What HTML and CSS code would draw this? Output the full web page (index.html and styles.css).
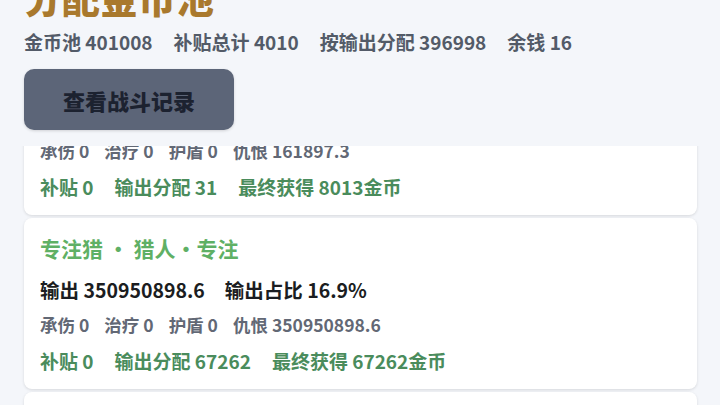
FILE: index.html
```html
<!DOCTYPE html>
<html lang="zh">
<head>
<meta charset="utf-8">
<link rel="stylesheet" href="styles.css">
</head>
<body>
<div class="page">
  <header class="head">
    <h1 class="title">分配金币池</h1>
    <div class="stats">
      <span>金币池 401008</span>
      <span>补贴总计 4010</span>
      <span>按输出分配 396998</span>
      <span>余钱 16</span>
    </div>
    <button class="btn">查看战斗记录</button>
  </header>
  <div class="viewport">
    <div class="list">
      <div class="card">
        <div class="name">火焰法 · 法师·火焰</div>
        <div class="main"><span>输出 161897.3</span><span>输出占比 0.0%</span></div>
        <div class="sub"><span>承伤 0</span><span>治疗 0</span><span>护盾 0</span><span>仇恨 161897.3</span></div>
        <div class="gain"><span>补贴 0</span><span>输出分配 31</span><span>最终获得 8013金币</span></div>
      </div>
      <div class="card">
        <div class="name">专注猎 · 猎人·专注</div>
        <div class="main"><span>输出 350950898.6</span><span>输出占比 16.9%</span></div>
        <div class="sub"><span>承伤 0</span><span>治疗 0</span><span>护盾 0</span><span>仇恨 350950898.6</span></div>
        <div class="gain"><span>补贴 0</span><span>输出分配 67262</span><span>最终获得 67262金币</span></div>
      </div>
      <div class="card">
        <div class="name">防护战 · 战士·防护</div>
        <div class="main"><span>输出 0</span><span>输出占比 0.0%</span></div>
      </div>
    </div>
  </div>
</div>
</body>
</html>
```
FILE: styles.css
```css
* { box-sizing: border-box; }
html, body { margin: 0; padding: 0; }
body {
  background: #f4f6fa;
  font-family: "Noto Sans CJK SC", "Noto Sans", sans-serif;
  width: 720px;
  height: 405px;
  overflow: hidden;
}
.page {
  display: flex;
  flex-direction: column;
  height: 405px;
}
.head {
  padding: 0 24px;
  height: 146px;
  flex: none;
}
.title {
  margin: -27px 0 0;
  font-size: 38px;
  line-height: 48px;
  font-weight: 900;
  color: #a9792d;
}
.stats {
  display: flex;
  gap: 21px;
  margin-top: 7px;
  font-size: 19px;
  line-height: 28px;
  font-weight: 700;
  color: #535b68;
}
.btn {
  display: block;
  margin-top: 13px;
  width: 210px;
  height: 61px;
  border: none;
  border-radius: 10px;
  background: #5c6578;
  color: #1c2230;
  font-family: inherit;
  font-size: 22px;
  font-weight: 900;
  box-shadow: 0 1px 3px rgba(0,0,0,0.15);
}
.viewport {
  flex: 1;
  overflow: hidden;
  padding: 0 24px;
}
.list {
  margin-top: -102px;
  display: flex;
  flex-direction: column;
  gap: 3px;
  width: 673px;
}
.card {
  background: #fff;
  border-radius: 8px;
  padding: 16px 16px 14px;
  box-shadow: 0 1px 3px rgba(0,0,0,0.12);
}
.name {
  font-size: 21px;
  line-height: 28px;
  font-weight: 700;
  color: #5fb065;
}
.main {
  display: flex;
  gap: 20px;
  margin-top: 14px;
  font-size: 19.5px;
  line-height: 28px;
  font-weight: 700;
  color: #1b1d21;
}
.sub {
  display: flex;
  gap: 15px;
  margin-top: 9px;
  font-size: 17.5px;
  line-height: 24px;
  font-weight: 600;
  color: #626875;
}
.gain {
  display: flex;
  gap: 21px;
  margin-top: 10px;
  font-size: 19px;
  line-height: 28px;
  font-weight: 700;
  color: #4a8c5c;
}
```
